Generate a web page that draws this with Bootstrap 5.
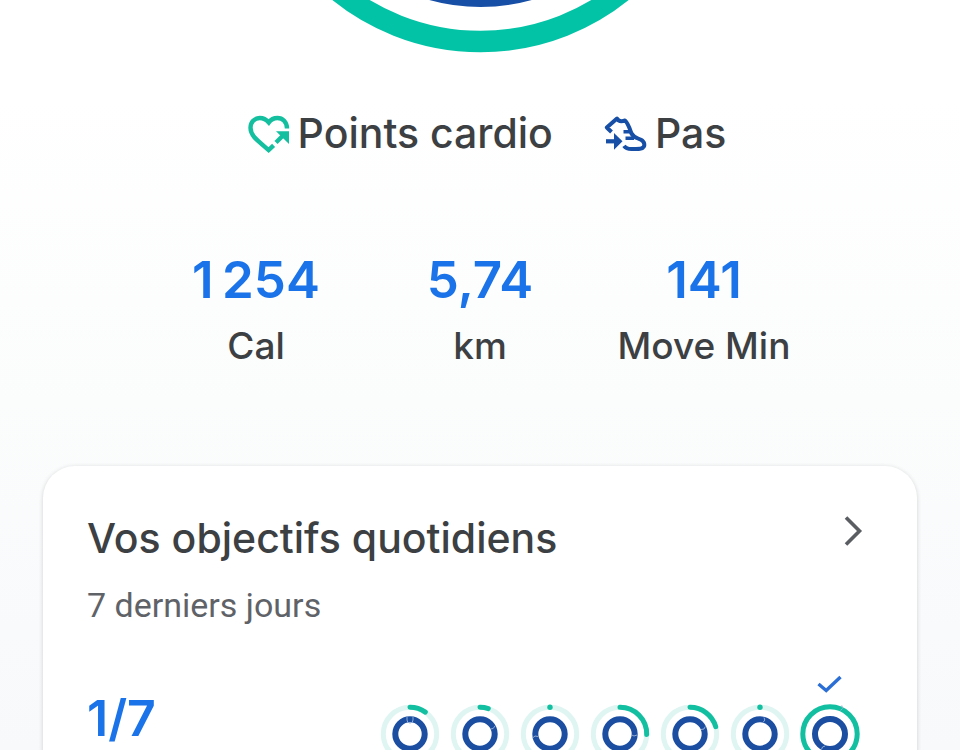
<!DOCTYPE html>
<html lang="fr">
<head>
<meta charset="utf-8">
<meta name="viewport" content="width=device-width, initial-scale=1">
<title>Objectifs quotidiens</title>
<link href="https://cdn.jsdelivr.net/npm/bootstrap@5.3.0/dist/css/bootstrap.min.css" rel="stylesheet">
<style>
  body {
    font-family: Inter, "Liberation Sans", sans-serif;
    font-weight: 500;
    color: #3c4043;
    background: linear-gradient(#fff 0, #fff 100px, #fbfcfc 400px, #f8f9fb 750px) no-repeat #f8f9fb;
  }
  .blue { color: #1a73e8; }
  .big-ring { width: 320px; }
  .legend { gap: 50px; margin-top: 48px; padding-left: 14px; font-size: 41px; line-height: 64px; }
  .stats { width: 70%; margin-top: 83px; }
  .figure-value { font-size: 51px; line-height: 64px; font-weight: 600; }
  .figure-unit { font-size: 37px; line-height: 48px; margin-top: 10px; }
  .goals { margin: 96px 43px 0; padding: 40px 44px; border-radius: 32px; background: #fff; box-shadow: 0 1px 4px rgba(60, 64, 67, .22); }
  .goals-title { font-size: 41px; line-height: 64px; font-weight: 500; }
  .goals-period { font-family: Roboto, "Liberation Sans", sans-serif; font-weight: 400; font-size: 34px; line-height: 48px; margin-top: 11px; color: #5f6368; }
  .goals-week { margin-top: 45px; }
  .goals-score { font-size: 50px; line-height: 64px; margin-top: 12px; font-weight: 600; }
  .days { gap: 8px; margin-right: 12px; }
  .day-ring { width: 62px; height: 92px; overflow: visible; }
  .track { fill: none; stroke: #def5f1; stroke-width: 5; }
  .steps { fill: none; stroke: #1b4da1; stroke-width: 6; }
  .cardio { fill: none; stroke: #12bfa0; stroke-width: 5; stroke-linecap: round; }
  .cap { fill: none; stroke: #8fabd6; stroke-width: 1; }
</style>
<script src="https://cdn.jsdelivr.net/npm/bootstrap@5.3.0/dist/js/bootstrap.bundle.min.js"></script>
</head>
<body>
<main class="vh-100 overflow-hidden d-flex flex-column">
  <svg class="big-ring d-block mx-auto flex-shrink-0" viewBox="0 0 320 53" role="img" aria-label="Objectifs du jour">
    <circle cx="160.5" cy="-184" r="225.5" fill="none" stroke="#03c3a6" stroke-width="21.5"/>
    <circle cx="160.5" cy="-184" r="180" fill="none" stroke="#174ea6" stroke-width="22"/>
  </svg>

  <div class="legend d-flex justify-content-center">
    <div class="d-flex align-items-center gap-2">
      <svg width="42" height="40" viewBox="0 0 42 40" fill="none" stroke="#14bf9f" stroke-width="4.4" aria-hidden="true">
        <path d="M39 15.500C39 9 34.500 5 29.500 5C25.500 5 22.500 7 20.800 9.500C18.500 6.800 15.500 5 11.800 5C6.500 5 2.500 9.200 2.500 14.800C2.500 23 10 28 20.600 37L25.600 32.300"/>
        <path d="M28 29.500L36 21.500"/>
        <path d="M28 18.200H41V31Z" fill="#14bf9f" stroke="none"/>
      </svg>
      <span>Points cardio</span>
    </div>
    <div class="d-flex align-items-center gap-2">
      <svg width="44" height="40" viewBox="0 0 44 40" fill="none" stroke="#174ea6" stroke-width="4" stroke-linejoin="round" aria-hidden="true">
        <path d="M8.500 19L3.800 14.500L14 5.500C15.500 8.500 19 8.500 22 7.500C25 10 26.500 15 28.500 20.500C30.500 24.500 34 24.800 38 26.800C42 29 42 33 40 34.500C38.500 36 36 36 33 36H28.500C25 36 22.500 35 21 32.800"/>
        <path d="M20.500 18.800H27.500M22.500 25.200H31" stroke-width="3.400"/>
        <path d="M3 28.300H12" stroke-width="4.200"/>
        <path d="M11 20L19.500 28.300L11 36.800Z" fill="#174ea6" stroke="none"/>
      </svg>
      <span>Pas</span>
    </div>
  </div>

  <div class="stats row g-0 mx-auto text-center">
    <div class="col"><div class="figure-value blue">1&#8239;254</div><div class="figure-unit">Cal</div></div>
    <div class="col"><div class="figure-value blue">5,74</div><div class="figure-unit">km</div></div>
    <div class="col"><div class="figure-value blue">141</div><div class="figure-unit">Move Min</div></div>
  </div>

  <section class="goals">
    <div class="d-flex justify-content-between align-items-start">
      <h2 class="goals-title mb-0">Vos objectifs quotidiens</h2>
      <button type="button" class="btn border-0 p-2 lh-1" aria-label="Afficher les objectifs">
        <svg class="d-block" width="24" height="32" viewBox="0 0 24 32" fill="none" stroke="#5a5d61" stroke-width="3.600" aria-hidden="true"><path d="M5 3.500L18.500 17L5 30.500"/></svg>
      </button>
    </div>
    <div class="goals-period">7 derniers jours</div>
    <div class="goals-week d-flex justify-content-between align-items-start">
      <div class="goals-score blue">1/7</div>
      <div class="days d-flex">
        <svg class="day-ring" viewBox="0 0 62 92"><circle class="track" cx="31" cy="60" r="26.700"/><circle class="steps" cx="31" cy="60" r="14.700"/><path class="cardio" d="M31 33.300A26.700 26.700 0 0 1 46.300 38.100"/><path class="cap" d="M28 42.500V46A3 3 0 0 0 34 46V42.500"/></svg>
        <svg class="day-ring" viewBox="0 0 62 92"><circle class="track" cx="31" cy="60" r="26.700"/><circle class="steps" cx="31" cy="60" r="14.700"/><path class="cardio" d="M31 33.300A26.700 26.700 0 0 1 39.300 34.600"/><path class="cap" d="M41.500 55L44.200 54.500L46 52"/></svg>
        <svg class="day-ring" viewBox="0 0 62 92"><circle class="track" cx="31" cy="60" r="26.700"/><circle class="steps" cx="31" cy="60" r="14.700"/><circle cx="31" cy="33.300" r="2.700" fill="#12bfa0"/><path class="cap" d="M13.500 64L16 62L19 62.500"/></svg>
        <svg class="day-ring" viewBox="0 0 62 92"><circle class="track" cx="31" cy="60" r="26.700"/><circle class="steps" cx="31" cy="60" r="14.700"/><path class="cardio" d="M31 33.300A26.700 26.700 0 0 1 57.700 60.500"/><path class="cap" d="M42.800 61L45 62L48 61"/></svg>
        <svg class="day-ring" viewBox="0 0 62 92"><circle class="track" cx="31" cy="60" r="26.700"/><circle class="steps" cx="31" cy="60" r="14.700"/><path class="cardio" d="M31 33.300A26.700 26.700 0 0 1 56.700 52.600"/><path class="cap" d="M42 55.500L45 55L46.300 52.500"/></svg>
        <svg class="day-ring" viewBox="0 0 62 92"><circle class="track" cx="31" cy="60" r="26.700"/><circle class="steps" cx="31" cy="60" r="14.700"/><circle cx="31" cy="33.300" r="2.700" fill="#12bfa0"/><path class="cap" d="M34 48.500L35.800 46L35 43.500"/></svg>
        <svg class="day-ring" viewBox="0 0 62 92"><circle class="cardio" cx="31" cy="60" r="27.200"/><circle class="steps" cx="31" cy="60" r="15"/><path class="cap" d="M41.500 36.500L43.500 34.500L42.800 31.500M26 72L23.500 73L22.500 75.500"/><path d="M19.500 10L27.200 16.500L41.500 3" fill="none" stroke="#2b6fd6" stroke-width="3.400"/></svg>
      </div>
    </div>
  </section>
</main>
</body>
</html>
